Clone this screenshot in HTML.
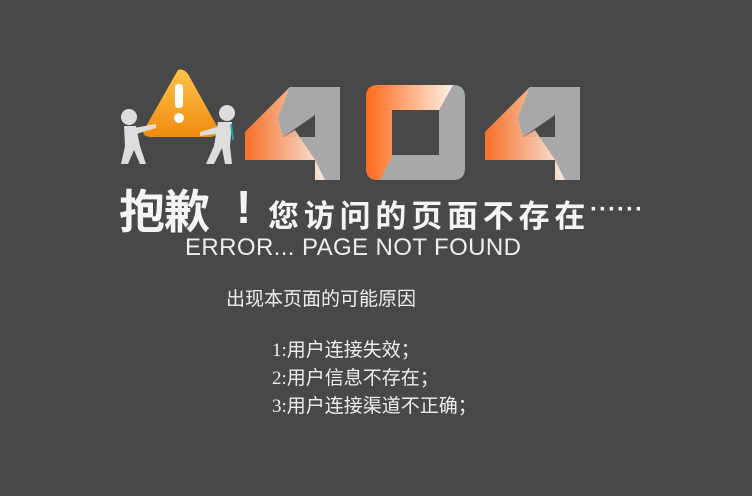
<!DOCTYPE html>
<html><head><meta charset="utf-8"><style>
html,body{margin:0;padding:0}
body{width:752px;height:496px;background:#484848;position:relative;overflow:hidden;font-family:"Liberation Sans","Noto Sans CJK SC",sans-serif;color:#fff}
.a{position:absolute;white-space:nowrap}
</style></head><body>
<svg class="a" style="left:0;top:0" width="752" height="300">
<defs>
<linearGradient id="o" x1="0" y1="0" x2="1" y2="0"><stop offset="0" stop-color="#ff6a1a"/><stop offset="1" stop-color="#fff0e8"/></linearGradient>
<linearGradient id="t" x1="0" y1="0" x2="0" y2="1"><stop offset="0" stop-color="#ffc24a"/><stop offset="1" stop-color="#f08a10"/></linearGradient>
</defs>
<path d="M178 70 Q183 68 188 74 L218 128 Q220 136 210 137 L150 137 Q140 136 145 128 Z" fill="url(#t)"/>
<rect x="175" y="84" width="8" height="24" rx="3" fill="#fff"/><circle cx="179" cy="118" r="5" fill="#fff"/>
<g fill="#ddd"><circle cx="129" cy="117" r="8"/><path d="M124 126 h12 l4 20 l6 18 h-6 l-6-14 l-6 14 h-7 l4-18 z"/><path d="M134 128 l22 -4 v4 l-20 6z"/>
<circle cx="227" cy="113" r="8"/><path d="M218 122 h14 l-2 24 l2 18 h-7 l-3-16 l-8 16 h-8 l8-18 z"/><path d="M220 126 l-20 6 v4 l22-3z"/></g>
<path d="M231 124 l2 16" stroke="#2aa" stroke-width="2"/>
<path d="M290 87 h50 v93 h-25 v-20 h-70 v-28 z M315 115 l-32 22 h32 z" fill="#a8a8a8" fill-rule="evenodd"/>
<path d="M290 87 l-45 45 v28 h70 l10 20 h-10 v-20 l-20-30 l-12 7 l-5-20 z" fill="url(#o)" opacity=".9"/>
<path d="M378 85 h75 q12 0 12 12 v71 q0 12 -12 12 h-75 q-12 0 -12 -12 v-71 q0 -12 12 -12z M392 108 v47 h47 v-47z" fill="#a8a8a8" fill-rule="evenodd"/>
<path d="M378 85 h75 l-14 25 h-47 v47 l-12 23 h-2 q-12 0 -12 -12 v-71 q0 -12 12 -12z" fill="url(#o)"/>
<path d="M530 87 h50 v93 h-25 v-20 h-70 v-28 z M555 115 l-32 22 h32 z" fill="#a8a8a8" fill-rule="evenodd"/>
<path d="M530 87 l-45 45 v28 h70 l10 20 h-10 v-20 l-20-30 l-12 7 l-5-20 z" fill="url(#o)" opacity=".9"/>
</svg>
<div class="a" style="left:119px;top:176px;font-size:46px;font-weight:bold;color:#f4f4f4;letter-spacing:-1px">抱歉</div>
<div class="a" style="left:236px;top:180px;font-size:46px;font-weight:bold;color:#f4f4f4">!</div>
<div class="a" style="left:268px;top:191px;font-size:31px;font-weight:bold;color:#f4f4f4;letter-spacing:4.8px">您访问的页面不存在</div>
<div class="a" style="left:590px;top:196px;font-size:24px;font-weight:bold;color:#f4f4f4;letter-spacing:1px">······</div>
<div class="a" style="left:185px;top:234px;font-size:24px;color:#eee;letter-spacing:0.4px">ERROR... PAGE NOT FOUND</div>
<div class="a" style="left:226px;top:284px;font-size:19px;color:#eee;font-family:'Noto Sans CJK SC',sans-serif">出现本页面的可能原因</div>
<div class="a" style="left:272px;top:337px;font-size:19px;line-height:28px;color:#eee;font-family:'Liberation Serif','Noto Sans CJK SC',sans-serif">1:用户连接失效；<br>2:用户信息不存在；<br>3:用户连接渠道不正确；</div>
</body></html>
